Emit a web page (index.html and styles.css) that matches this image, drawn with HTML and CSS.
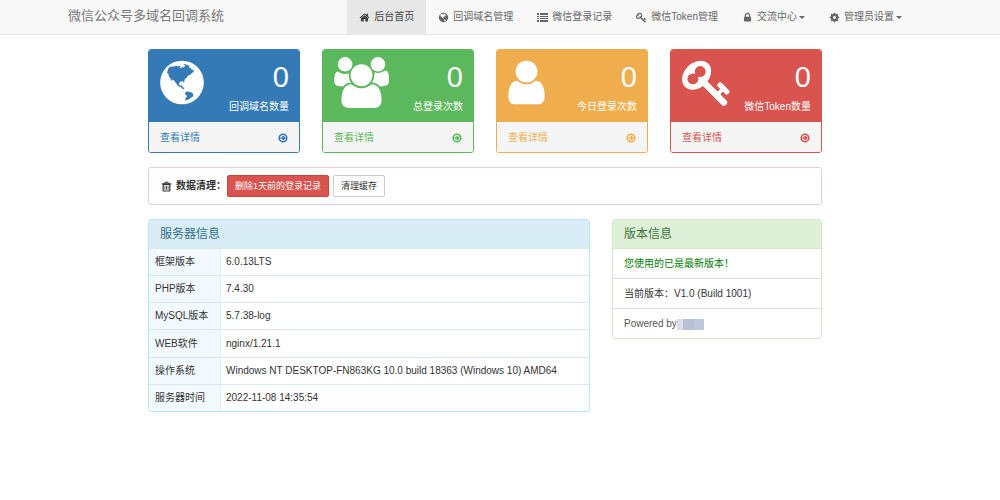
FILE: index.html
```html
<!DOCTYPE html>
<html lang="zh-CN">
<head>
<meta charset="utf-8">
<meta name="viewport" content="width=device-width, initial-scale=1">
<title>微信公众号多域名回调系统</title>
<link rel="stylesheet" href="styles.css">
</head>
<body>
<svg class="sprite" aria-hidden="true">
  <symbol id="globe" viewBox="128 0 1536 1792">
    <path fill-rule="evenodd" d="M896 128a768 768 0 1 0 0 1536a768 768 0 1 0 0-1536z
      M405 420L470 345L600 330L690 310L770 330L830 300L850 340L800 370L870 395L900 350L965 365L1010 300L960 270L990 250L1120 300L1160 330L1130 370L1210 390L1230 440L1320 480L1300 530L1240 560L1190 620L1110 650L1060 730L990 790L970 900L925 850L820 870L790 950L830 1010L900 990L910 1050L980 1090L960 1130L900 1110L860 1060L760 1020L700 940L610 820L560 790L540 860L510 780L440 690L420 590L370 560Z
      M1000 1260L1080 1210L1200 1230L1290 1290L1290 1380L1200 1440L1110 1500L1010 1530L1030 1430L1080 1370L1010 1320Z"/>
  </symbol>
  <symbol id="users" viewBox="0 0 1920 1792"><path d="M593 896q-162 5-265 128h-134q-82 0-138-40.5t-56-118.5q0-353 124-353 6 0 43.5 21t97.5 42.5 119 21.5q67 0 133-23-5 37-5 66 0 159 90 293zm1071 637q0 120-73 189.5t-194 69.5h-874q-121 0-194-69.5t-73-189.5q0-53 3.5-103.5t14-109 26.5-108.5 43-97.5 62-81 85.5-53.5 111.5-20q10 0 43 21.5t73 48 107 48 135 21.5 135-21.5 107-48 73-48 43-21.5q61 0 111.5 20t85.5 53.5 62 81 43 97.5 26.5 108.5 14 109 3.5 103.5zm-1024-1277q0 106-75 181t-181 75-181-75-75-181 75-181 181-75 181 75 75 181zm704 384q0 159-112.5 271.5t-271.5 112.5-271.5-112.5-112.5-271.5 112.5-271.5 271.5-112.5 271.5 112.5 112.5 271.5zm576 225q0 78-56 118.5t-138 40.5h-134q-103-123-265-128 90-134 90-293 0-29-5-66 66 23 133 23 59 0 119-21.5t97.5-42.5 43.5-21q124 0 124 353zm-128-609q0 106-75 181t-181 75-181-75-75-181 75-181 181-75 181 75 75 181z"/></symbol>
  <symbol id="user" viewBox="256 0 1280 1792"><path d="M1536 1399q0 109-62.5 187t-150.5 78h-854q-88 0-150.5-78t-62.5-187q0-85 8.5-160.5t31.5-152 58.5-131 94-89 134.5-34.5q131 128 313 128t313-128q76 0 134.5 34.5t94 89 58.5 131 31.5 152 8.5 160.5zm-256-887q0 159-112.5 271.5t-271.5 112.5-271.5-112.5-112.5-271.5 112.5-271.5 271.5-112.5 271.5 112.5 112.5 271.5z"/></symbol>
  <symbol id="key" viewBox="0 0 1792 1792"><path d="M832 512q0-80-56-136t-136-56-136 56-56 136q0 42 19 83-41-19-83-19-80 0-136 56t-56 136 56 136 136 56 136-56 56-136q0-42-19-83 41 19 83 19 80 0 136-56t56-136zm851 704q0 17-49 66t-66 49q-9 0-28.5-16t-36.5-33-38.5-40-24.5-26l-96 96 220 220q28 28 28 68 0 42-39 81t-81 39q-40 0-68-28l-671-671q-176 131-365 131-163 0-265.5-102.5t-102.5-265.5q0-160 95-313t248-248 313-95q163 0 265.5 102.5t102.5 265.5q0 189-131 365l355 355 96-96q-3-3-26-24.5t-40-38.5-33-36.5-16-28.5q0-17 49-66t66-49q13 0 23 10 6 6 46 44.5t82 79.5 86.5 86 73 78 28.5 41z"/></symbol>
  <symbol id="home" viewBox="0 0 1792 1792"><path d="M1472 992v480q0 26-19 45t-45 19h-384v-384h-256v384h-384q-26 0-45-19t-19-45v-480q0-1 .5-3t.5-3l575-474 575 474q1 2 1 6zm223-69l-62 74q-8 9-21 11h-3q-13 0-21-7l-692-577-692 577q-12 8-24 7-13-2-21-11l-62-74q-8-10-7-23.5t11-21.5l719-599q32-26 76-26t76 26l244 204v-195q0-14 9-23t23-9h192q14 0 23 9t9 23v408l219 182q10 8 11 21.5t-7 23.5z"/></symbol>
  <symbol id="list" viewBox="0 0 11 11"><path d="M0 1h2v2H0zM0 4h2v1H0zM0 6h2v1H0zM0 8h2v2H0zM3 1h8v2H3zM3 4h8v1H3zM3 6h8v1H3zM3 8h8v2H3z"/></symbol>
  <symbol id="lock" viewBox="0 0 1792 1792"><path d="M640 768h512v-192q0-106-75-181t-181-75-181 75-75 181v192zm832 96v576q0 40-28 68t-68 28h-960q-40 0-68-28t-28-68v-576q0-40 28-68t68-28h32v-192q0-184 132-316t316-132 316 132 132 316v192h32q40 0 68 28t28 68z"/></symbol>
  <symbol id="cog" viewBox="0 0 1792 1792"><path d="M1152 896q0-106-75-181t-181-75-181 75-75 181 75 181 181 75 181-75 75-181zm512-109v222q0 12-8 23t-20 13l-185 28q-19 54-39 91 35 50 107 138 10 12 10 25t-9 23q-27 37-99 108t-94 71q-12 0-26-9l-138-108q-44 23-91 38-16 136-29 186-7 28-36 28h-222q-14 0-24.5-8.5t-11.5-21.5l-28-184q-49-16-90-37l-141 107q-10 9-25 9-14 0-25-11-126-114-165-168-7-10-7-23 0-12 8-23 15-21 51-66.5t54-70.5q-27-50-41-99l-183-27q-13-2-21-12.5t-8-23.5v-222q0-12 8-23t19-13l186-28q14-46 39-92-40-57-107-138-10-12-10-24 0-10 9-23 26-36 98.5-107.5t94.5-71.5q13 0 26 10l138 107q44-23 91-38 16-136 29-186 7-28 36-28h222q14 0 24.5 8.5t11.5 21.5l28 184q49 16 90 37l142-107q9-9 24-9 13 0 25 10 129 119 165 170 7 8 7 22 0 12-8 23-15 21-51 66.5t-54 70.5q26 50 41 98l183 28q13 2 21 12.5t8 23.5z"/></symbol>
  <symbol id="trash" viewBox="0 0 14 14"><path fill-rule="evenodd" d="M5 1h4l1 2h3v1.500h-1V12q0 1.500-1.500 1.500h-7Q2 13.500 2 12V4.500H1V3h3zM5.500 2.200L5.200 3h3.600l-.3-.8zM3.500 5v7h7V5zM4.500 6h1v5h-1zM6.500 6h1v5h-1zM8.500 6h1v5h-1z"/></symbol>
  <symbol id="arrow" viewBox="0 0 12 12"><g fill="none" stroke="currentColor" stroke-width="2"><circle cx="6" cy="6" r="4.500"/><path d="M3 6h5M5.600 3.600L8 6L5.600 8.400"/></g></symbol>
</svg>

<header class="navbar">
  <div class="navbar-inner">
    <a class="brand" href="#">微信公众号多域名回调系统</a>
    <nav class="menu">
      <a class="menu-item active" href="#"><svg class="icon"><use href="#home"/></svg>后台首页</a>
      <a class="menu-item" href="#"><svg class="icon"><use href="#globe"/></svg>回调域名管理</a>
      <a class="menu-item" href="#"><svg class="icon"><use href="#list"/></svg>微信登录记录</a>
      <a class="menu-item" href="#"><svg class="icon"><use href="#key"/></svg>微信Token管理</a>
      <a class="menu-item" href="#"><svg class="icon"><use href="#lock"/></svg><span>交流中心<i class="caret"></i></span></a>
      <a class="menu-item" href="#"><svg class="icon"><use href="#cog"/></svg><span>管理员设置<i class="caret"></i></span></a>
    </nav>
  </div>
</header>

<main class="page">
  <section class="cards">
    <article class="card blue">
      <div class="card-head"><svg class="card-icon globe"><use href="#globe"/></svg><div class="stat"><div class="number">0</div><div>回调域名数量</div></div></div>
      <a class="card-foot" href="#">查看详情<svg class="arrow"><use href="#arrow"/></svg></a>
    </article>
    <article class="card green">
      <div class="card-head"><svg class="card-icon users"><use href="#users"/></svg><div class="stat"><div class="number">0</div><div>总登录次数</div></div></div>
      <a class="card-foot" href="#">查看详情<svg class="arrow"><use href="#arrow"/></svg></a>
    </article>
    <article class="card orange">
      <div class="card-head"><svg class="card-icon user"><use href="#user"/></svg><div class="stat"><div class="number">0</div><div>今日登录次数</div></div></div>
      <a class="card-foot" href="#">查看详情<svg class="arrow"><use href="#arrow"/></svg></a>
    </article>
    <article class="card red">
      <div class="card-head"><svg class="card-icon key"><use href="#key"/></svg><div class="stat"><div class="number">0</div><div>微信Token数量</div></div></div>
      <a class="card-foot" href="#">查看详情<svg class="arrow"><use href="#arrow"/></svg></a>
    </article>
  </section>

  <section class="cleanup">
    <svg class="icon"><use href="#trash"/></svg>
    <strong class="cleanup-label">数据清理：</strong>
    <button class="btn btn-danger" type="button">删除1天前的登录记录</button>
    <button class="btn" type="button">清理缓存</button>
  </section>

  <div class="info">
    <section class="panel server">
      <h2 class="panel-title">服务器信息</h2>
      <table class="server-table">
        <tr><th scope="row">框架版本</th><td>6.0.13LTS</td></tr>
        <tr><th scope="row">PHP版本</th><td>7.4.30</td></tr>
        <tr><th scope="row">MySQL版本</th><td>5.7.38-log</td></tr>
        <tr><th scope="row">WEB软件</th><td>nginx/1.21.1</td></tr>
        <tr><th scope="row">操作系统</th><td>Windows NT DESKTOP-FN863KG 10.0 build 18363 (Windows 10) AMD64</td></tr>
        <tr><th scope="row">服务器时间</th><td>2022-11-08 14:35:54</td></tr>
      </table>
    </section>
    <section class="panel version">
      <h2 class="panel-title">版本信息</h2>
      <ul class="version-list">
        <li class="latest">您使用的已是最新版本！</li>
        <li>当前版本：V1.0 (Build 1001)</li>
        <li class="powered">Powered by<span class="mask"></span></li>
      </ul>
    </section>
  </div>
</main>
</body>
</html>
```
FILE: styles.css
```css
* { box-sizing: border-box; }

body {
  margin: 0;
  background: #fff;
  color: #333;
  font: 10px/14px "Liberation Sans", "Noto Sans CJK SC", sans-serif;
}

a { color: inherit; text-decoration: none; }
svg { fill: currentColor; flex: none; }
.sprite { display: none; }
.icon { width: 11px; height: 11px; }

.navbar {
  padding-right: 18px;
  background: #f8f8f8;
  border-bottom: 1px solid #e7e7e7;
}
.navbar-inner {
  display: flex;
  justify-content: space-between;
  max-width: 846px;
  margin: 0 auto;
}
.brand {
  color: #777;
  font-size: 13px;
  line-height: 32px;
  white-space: nowrap;
}
.menu { display: flex; }
.menu-item {
  display: flex;
  align-items: center;
  gap: 4px;
  padding: 10px 12px;
  color: #666;
  white-space: nowrap;
}
.menu-item.active { background: #e7e7e7; color: #444; }
.caret {
  display: inline-block;
  margin-left: 2px;
  border: 3px solid transparent;
  border-top-color: currentColor;
  border-bottom: 0;
  vertical-align: middle;
}

.page {
  display: grid;
  gap: 14px;
  max-width: 704px;
  margin: 0 auto;
  padding: 14px 30px 14px 0;
}

.cards {
  display: grid;
  grid-template-columns: repeat(4, 1fr);
  gap: 22px;
}
.card {
  overflow: hidden;
  border: 1px solid var(--tone);
  border-radius: 3px;
  color: var(--tone);
}
.blue { --tone: #337ab7; }
.green { --tone: #5cb85c; }
.orange { --tone: #f0ad4e; }
.red { --tone: #d9534f; }
.card-head {
  display: flex;
  justify-content: space-between;
  padding: 7px 10px 8px 11px;
  background: var(--tone);
  color: #fff;
}
.card-icon { height: 51px; overflow: visible; }
.card-icon.globe { width: 44px; }
.card-icon.users { width: 55px; }
.card-icon.user { width: 37px; }
.card-icon.key { width: 51px; }
.stat { padding-top: 4px; text-align: right; white-space: nowrap; }
.number {
  margin-bottom: 7px;
  font-size: 29px;
  line-height: 32px;
}
.card-foot {
  display: flex;
  align-items: center;
  justify-content: space-between;
  padding: 9px 11px 7px;
  background: #f5f5f5;
}
.arrow { width: 10px; height: 10px; }

.cleanup {
  display: flex;
  align-items: center;
  gap: 4px;
  padding: 7px 12px;
  border: 1px solid #ebccd1;
  border-radius: 3px;
}
.cleanup-label { width: 47px; white-space: nowrap; }
.btn {
  padding: 3px 7px;
  border: 1px solid #ccc;
  border-radius: 2px;
  background: #fff;
  color: #333;
  font: inherit;
  font-size: 9px;
  line-height: 14px;
}
.btn-danger { border-color: #d43f3a; background: #d9534f; color: #fff; }

.info {
  display: grid;
  grid-template-columns: 442fr 210fr;
  align-items: start;
  gap: 22px;
}
.panel {
  overflow: hidden;
  border: 1px solid var(--edge);
  border-radius: 3px;
}
.server { --edge: #bce8f1; }
.version { --edge: #d6e9c6; }
.panel-title {
  margin: 0;
  padding: 7px 11px;
  font-size: 12px;
  font-weight: normal;
  line-height: 14px;
}
.server .panel-title { background: #d9edf7; color: #31708f; }
.version .panel-title { background: #dff0d8; color: #3c763d; }
.server-table {
  width: 100%;
  height: 163px;
  border-spacing: 0;
  text-align: left;
}
.server-table th,
.server-table td {
  padding: 0 5px;
  border-top: 1px solid #d5e9ee;
}
.server-table th {
  width: 72px;
  padding-left: 6px;
  border-right: 1px solid #e2eff5;
  background: #f3faff;
  font-weight: normal;
}
.version-list { margin: 0; padding: 0; list-style: none; }
.version-list li {
  padding: 8px 11px 7px;
  border-top: 1px solid #ddd;
}
.version-list .latest { border-color: #d6e9c6; color: #008000; }
.version-list .powered { display: flex; align-items: center; color: #555; }
.mask {
  width: 27px;
  height: 11px;
  background: linear-gradient(90deg, #d8dfe6 6px, #b9c1d5 6px 17px, #c0c9db 17px);
}
```
